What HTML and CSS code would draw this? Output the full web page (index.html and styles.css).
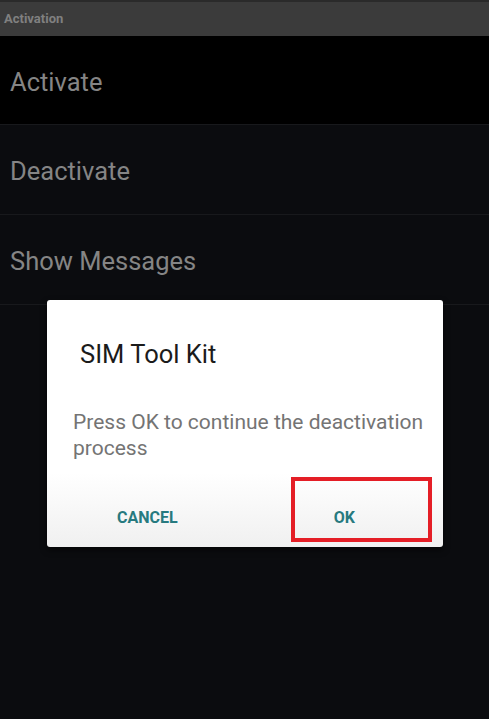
FILE: index.html
```html
<!DOCTYPE html>
<html lang="en">
<head>
  <meta charset="UTF-8">
  <title>Activation</title>
  <meta name="viewport" content="width=device-width, initial-scale=1">
  <link rel="stylesheet" href="styles.css">
</head>
<body>
  <div class="topbar">Activation</div>
  <ul class="menu">
    <li class="first">Activate</li>
    <li>Deactivate</li>
    <li>Show Messages</li>
  </ul>

  <div class="dialog">
    <h3>SIM Tool Kit</h3>
    <p>Press OK to continue the deactivation process</p>
    <div class="actions">
      <button class="cancel">CANCEL</button>
      <button class="ok">OK</button>
    </div>
  </div>
  <div class="highlight"></div>
</body>
</html>
```

FILE: styles.css
```css
body {
  font-family: Roboto, "Noto Sans", sans-serif;
  background: #0b0c0f;
  margin: 0;
  height: 719px;
  position: relative;
  overflow: hidden;
}
.topbar {
  height: 34px;
  line-height: 34px;
  background: #3b3b3b;
  border-top: 2px solid #2a2a2a;
  color: #808080;
  font-size: 13px;
  font-weight: bold;
  padding-left: 4px;
}
.menu {
  list-style: none;
  margin: 0;
  padding: 0;
}
.menu li {
  height: 89px;
  line-height: 92px;
  padding-left: 10px;
  font-size: 25.5px;
  color: #858585;
  border-bottom: 1px solid #18191c;
}
.menu li.first {
  background: #000;
  height: 88px;
  line-height: 93px;
}
.dialog {
  position: absolute;
  left: 47px;
  top: 300px;
  width: 396px;
  height: 247px;
  box-sizing: border-box;
  background: linear-gradient(#ffffff 70%, #f0f0f0);
  border-radius: 3px;
  box-shadow: 0 3px 6px rgba(0,0,0,0.6);
  padding: 39px 16px 0 26px;
}
.dialog h3 {
  margin: 0 0 0 7px;
  font-size: 25.5px;
  font-weight: normal;
  color: #1b1b1b;
}
.dialog p {
  margin: 40px 0 0;
  font-size: 21px;
  line-height: 26px;
  color: #747474;
}
.actions {
  display: flex;
  margin-top: 47px;
}
.actions button {
  background: none;
  border: none;
  font-family: inherit;
  font-weight: bold;
  font-size: 16px;
  color: #277a7f;
  padding: 0;
}
.cancel {
  margin-left: 44px;
}
.ok {
  margin-left: 156px;
}
.highlight {
  position: absolute;
  left: 291px;
  top: 477px;
  width: 133px;
  height: 57px;
  border: 4px solid #e41e26;
}
```
